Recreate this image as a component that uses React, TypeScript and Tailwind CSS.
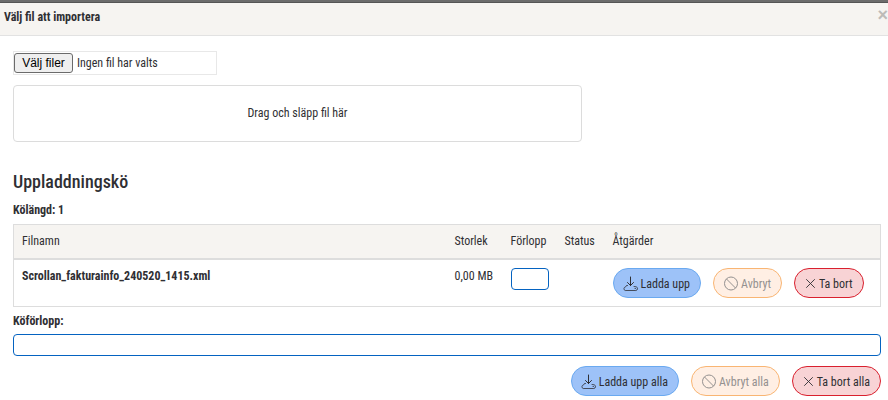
import React, { useRef } from 'react'
import clsx from 'clsx'

interface QueueItem {
    name: string
    size: string
    progress: number
    status: string
}

type Action = 'upload' | 'cancel' | 'remove'

interface ActionButtonProps {
    action: Action
    label: string
    disabled?: boolean
}

const queue: QueueItem[] = [
    { name: 'Scrollan_fakturainfo_240520_1415.xml', size: '0,00 MB', progress: 0, status: '' },
]

function ActionIcon({ action }: { action: Action }) {
    if (action === 'upload') {
        return (
            <svg className="h-4 w-[14px] shrink-0 overflow-visible" viewBox="0 0 14 16" fill="none" stroke="currentColor" strokeLinecap="round" strokeLinejoin="round">
                <path d="M6.500 1v8.500M3.500 6.500l3 3 3-3" />
                <path d="M3.500 9.500H2.500L1.500 11A1.800 1.800 0 0 0 1.200 14.500h10.600a1.900 1.900 0 0 0 .4-3.700l-2.200-.3" strokeWidth="0.8" />
                <path d="M11 12.500h.5" strokeWidth="0.8" />
            </svg>
        )
    }
    if (action === 'cancel') {
        return (
            <svg className="h-4 w-[14px] shrink-0" viewBox="0 0 14 16" fill="none" stroke="currentColor">
                <circle cx="7" cy="7.500" r="6.500" />
                <path d="M2.400 2.900l9.200 9.200" />
            </svg>
        )
    }
    return (
        <svg className="h-4 w-[11px] shrink-0" viewBox="0 0 11 16" fill="none" stroke="currentColor" strokeWidth="0.9" strokeLinecap="round">
            <path d="M1.500 3.500l8 8M9.500 3.500l-8 8" />
        </svg>
    )
}

function ActionButton({ action, label, disabled }: ActionButtonProps) {
    return (
        <button
            type="button"
            disabled={disabled}
            className={clsx(
                'flex h-[30px] items-center gap-[3px] whitespace-nowrap rounded-full border px-[10px] pt-[3px] text-[12px] leading-4',
                action === 'upload' && 'border-[#6aa9f0] bg-[#9dc2f8]',
                action === 'cancel' && 'border-[#f9b573] bg-[#ffefe4]',
                action === 'remove' && 'border-[#d9202e] bg-[#f8d3d5]',
                disabled ? 'text-[#949190]' : 'text-[#2f2f33]'
            )}
        >
            <ActionIcon action={action} />
            <span>{label}</span>
        </button>
    )
}

function ProgressBar({ value, label, className }: { value: number; label: string; className?: string }) {
    return (
        <div
            role="progressbar"
            aria-label={label}
            aria-valuenow={value}
            className={clsx('h-[22px] overflow-hidden rounded border border-[#0563c1] bg-white', className)}
        >
            <div className="h-full bg-[#0563c1]" style={{ width: `${value}%` }} />
        </div>
    )
}

export default function App() {
    const fileInput = useRef<HTMLInputElement>(null)

    return (
        <div className="bg-white font-['Roboto_Condensed','Liberation_Sans_Narrow',sans-serif] text-[12px] leading-4 text-[#2f2f33]">
            <div className="h-[3px] border-b border-[#555555] bg-[#6c6c6c]" />

            <header className="flex h-[33px] items-center justify-between border-b border-[#e2e2e2] bg-[#f6f4f1] pb-1 pl-1">
                <h1 className="font-bold">Välj fil att importera</h1>
                <button type="button" aria-label="Stäng" className="pb-1 font-['Liberation_Sans',sans-serif] text-[18px] leading-4 font-bold text-[#bdbbb8]">
                    ×
                </button>
            </header>

            <main className="pt-[15px] pr-[7px] pl-[13px]">
                {/* Filväljare */}
                <div className="flex h-6 w-[204px] items-center gap-1 border border-[#e8e8e8]">
                    <input ref={fileInput} id="files" type="file" multiple className="hidden" />
                    <button
                        type="button"
                        onClick={() => fileInput.current?.click()}
                        className="h-5 w-[59px] rounded-[3px] border border-[#6b6b6b] bg-[#efefef] font-['Liberation_Sans',sans-serif] text-[12px] leading-4 whitespace-nowrap text-black"
                    >
                        Välj filer
                    </button>
                    <label htmlFor="files">Ingen fil har valts</label>
                </div>

                <div className="mt-[10px] flex h-[57px] w-[569px] max-w-full items-center justify-center rounded border border-[#dcdcdc] pb-0.5">
                    Drag och släpp fil här
                </div>

                {/* Kö */}
                <h2 className="mt-7 text-[18px] leading-6 font-medium">Uppladdningskö</h2>
                <p className="mt-2 font-bold">Kölängd: 1</p>

                <table className="mt-[6px] w-full table-fixed border-collapse border border-[#dddddd] text-left">
                    <colgroup>
                        <col />
                        <col className="w-14" />
                        <col className="w-[54px]" />
                        <col className="w-12" />
                        <col className="w-[276px]" />
                    </colgroup>
                    <thead>
                        <tr className="h-[34px] border-b-2 border-[#dddddd] bg-[#f6f4f1]">
                            {['Filnamn', 'Storlek', 'Förlopp', 'Status', 'Åtgärder'].map((heading) => (
                                <th key={heading} className="px-2 font-normal">
                                    {heading}
                                </th>
                            ))}
                        </tr>
                    </thead>
                    <tbody>
                        {queue.map((item) => (
                            <tr key={item.name} className="align-top">
                                <td className="p-2 font-bold">{item.name}</td>
                                <td className="py-2 pl-2 whitespace-nowrap">{item.size}</td>
                                <td className="p-2">
                                    <ProgressBar value={item.progress} label="Förlopp" />
                                </td>
                                <td className="p-2">{item.status}</td>
                                <td className="p-2">
                                    <div className="flex gap-3">
                                        <ActionButton action="upload" label="Ladda upp" />
                                        <ActionButton action="cancel" label="Avbryt" disabled />
                                        <ActionButton action="remove" label="Ta bort" />
                                    </div>
                                </td>
                            </tr>
                        ))}
                    </tbody>
                </table>

                <p className="mt-[6px] font-bold">Köförlopp:</p>
                <ProgressBar value={0} label="Köförlopp" className="mt-[5px]" />

                <div className="mt-[10px] flex justify-end gap-3">
                    <ActionButton action="upload" label="Ladda upp alla" />
                    <ActionButton action="cancel" label="Avbryt alla" disabled />
                    <ActionButton action="remove" label="Ta bort alla" />
                </div>
            </main>
        </div>
    )
}
